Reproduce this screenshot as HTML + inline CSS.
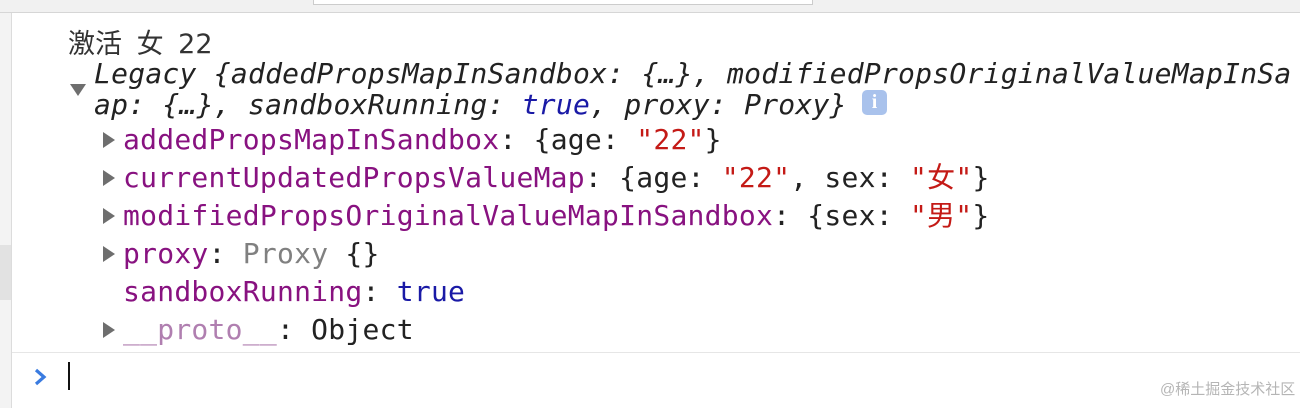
<!DOCTYPE html>
<html><head><meta charset="utf-8"><style>
html,body{margin:0;padding:0;width:1300px;height:408px;overflow:hidden;background:#fff;position:relative}
.m{font-family:"DejaVu Sans Mono","Noto Sans CJK SC",monospace;font-size:28px;letter-spacing:0.25px;white-space:pre;position:absolute;line-height:38px;color:#222}
.k{color:#881280}.s{color:#c41a16}.b{color:#1a1aa6}.g{color:#808080}.p{color:#b07fb0}
.tri{position:absolute;width:0;height:0;border-top:8px solid transparent;border-bottom:8px solid transparent;border-left:12px solid #6e6e6e}
</style></head><body>
<div style="position:absolute;left:0;top:0;width:1300px;height:12px;background:#f1f1f1;border-bottom:1px solid #d6d6d6"></div>
<div style="position:absolute;left:313px;top:0;width:498px;height:4px;background:#fff;border:1px solid #ccc;border-top:none"></div>
<div style="position:absolute;left:0;top:13px;width:11px;height:395px;background:#f3f3f3;border-right:1px solid #dcdcdc"></div>
<div style="position:absolute;left:0;top:245px;width:11px;height:55px;background:#e2e2e2"></div>
<div style="position:absolute;left:68px;top:22px;font-family:'DejaVu Sans','Noto Sans CJK SC',sans-serif;font-size:27px;color:#333;word-spacing:6px">激活 女 22</div>
<div class="m" style="left:94px;top:55px;width:1206px;overflow:hidden;font-style:italic">Legacy {addedPropsMapInSandbox: {…}, modifiedPropsOriginalValueMapInSa</div>
<div class="m" style="left:94px;top:86px;font-style:italic">ap: {…}, sandboxRunning: <span class="b">true</span>, proxy: Proxy}</div>
<div style="position:absolute;left:862px;top:90px;width:25px;height:25px;border-radius:5px;background:#a9c2ec;color:#fff;font:bold 20px 'Liberation Serif',serif;text-align:center;line-height:25px">i</div>
<div style="position:absolute;left:70px;top:84px;width:0;height:0;border-left:8px solid transparent;border-right:8px solid transparent;border-top:12px solid #6e6e6e"></div>
<div class="tri" style="left:103px;top:132px"></div>
<div class="m" style="left:123px;top:121px"><span class="k">addedPropsMapInSandbox</span>: {age: <span class="s">"22"</span>}</div>
<div class="tri" style="left:103px;top:170px"></div>
<div class="m" style="left:123px;top:159px"><span class="k">currentUpdatedPropsValueMap</span>: {age: <span class="s">"22"</span>, sex: <span class="s">"女"</span>}</div>
<div class="tri" style="left:103px;top:208px"></div>
<div class="m" style="left:123px;top:197px"><span class="k">modifiedPropsOriginalValueMapInSandbox</span>: {sex: <span class="s">"男"</span>}</div>
<div class="tri" style="left:103px;top:246px"></div>
<div class="m" style="left:123px;top:235px"><span class="k">proxy</span>: <span class="g">Proxy</span> {}</div>
<div class="m" style="left:123px;top:273px"><span class="k">sandboxRunning</span>: <span class="b">true</span></div>
<div class="tri" style="left:103px;top:322px"></div>
<div class="m" style="left:123px;top:311px"><span class="p">__proto__</span>: Object</div>
<div style="position:absolute;left:12px;top:352px;width:1288px;height:1px;background:#e6e6e6"></div>
<svg style="position:absolute;left:33px;top:368px" width="14" height="18" viewBox="0 0 14 18"><path d="M3 2 L11 9 L3 16" fill="none" stroke="#3a7be0" stroke-width="3.2"/></svg>
<div style="position:absolute;left:68px;top:362px;width:2px;height:28px;background:#111"></div>
<div style="position:absolute;left:1160px;top:378px;font-family:'Liberation Sans','Noto Sans CJK SC',sans-serif;font-size:15px;color:#b5b5b5">@稀土掘金技术社区</div>
</body></html>
